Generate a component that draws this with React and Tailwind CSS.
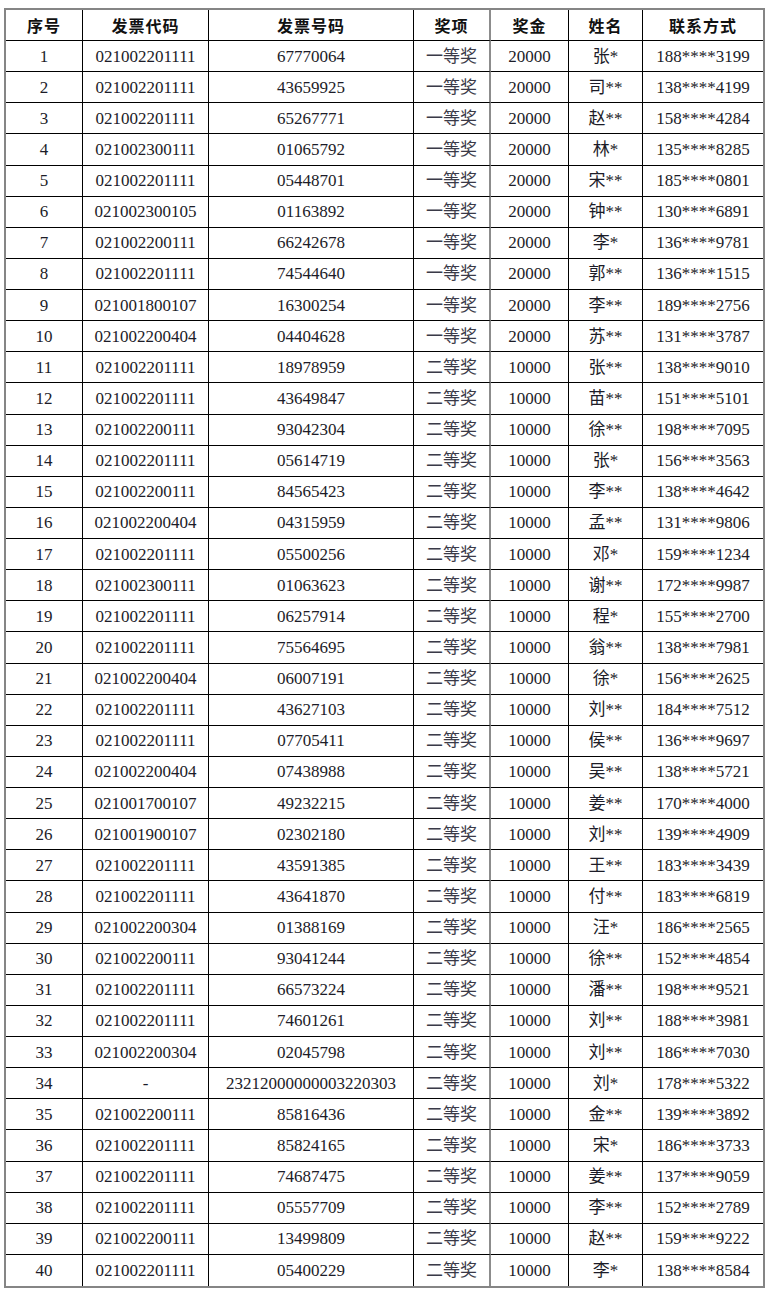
import React from "react";

const rows = [
  ["1", "021002201111", "67770064", "一等奖", "20000", "张*", "188****3199"],
  ["2", "021002201111", "43659925", "一等奖", "20000", "司**", "138****4199"],
  ["3", "021002201111", "65267771", "一等奖", "20000", "赵**", "158****4284"],
  ["4", "021002300111", "01065792", "一等奖", "20000", "林*", "135****8285"],
  ["5", "021002201111", "05448701", "一等奖", "20000", "宋**", "185****0801"],
  ["6", "021002300105", "01163892", "一等奖", "20000", "钟**", "130****6891"],
  ["7", "021002200111", "66242678", "一等奖", "20000", "李*", "136****9781"],
  ["8", "021002201111", "74544640", "一等奖", "20000", "郭**", "136****1515"],
  ["9", "021001800107", "16300254", "一等奖", "20000", "李**", "189****2756"],
  ["10", "021002200404", "04404628", "一等奖", "20000", "苏**", "131****3787"],
  ["11", "021002201111", "18978959", "二等奖", "10000", "张**", "138****9010"],
  ["12", "021002201111", "43649847", "二等奖", "10000", "苗**", "151****5101"],
  ["13", "021002200111", "93042304", "二等奖", "10000", "徐**", "198****7095"],
  ["14", "021002201111", "05614719", "二等奖", "10000", "张*", "156****3563"],
  ["15", "021002200111", "84565423", "二等奖", "10000", "李**", "138****4642"],
  ["16", "021002200404", "04315959", "二等奖", "10000", "孟**", "131****9806"],
  ["17", "021002201111", "05500256", "二等奖", "10000", "邓*", "159****1234"],
  ["18", "021002300111", "01063623", "二等奖", "10000", "谢**", "172****9987"],
  ["19", "021002201111", "06257914", "二等奖", "10000", "程*", "155****2700"],
  ["20", "021002201111", "75564695", "二等奖", "10000", "翁**", "138****7981"],
  ["21", "021002200404", "06007191", "二等奖", "10000", "徐*", "156****2625"],
  ["22", "021002201111", "43627103", "二等奖", "10000", "刘**", "184****7512"],
  ["23", "021002201111", "07705411", "二等奖", "10000", "侯**", "136****9697"],
  ["24", "021002200404", "07438988", "二等奖", "10000", "吴**", "138****5721"],
  ["25", "021001700107", "49232215", "二等奖", "10000", "姜**", "170****4000"],
  ["26", "021001900107", "02302180", "二等奖", "10000", "刘**", "139****4909"],
  ["27", "021002201111", "43591385", "二等奖", "10000", "王**", "183****3439"],
  ["28", "021002201111", "43641870", "二等奖", "10000", "付**", "183****6819"],
  ["29", "021002200304", "01388169", "二等奖", "10000", "汪*", "186****2565"],
  ["30", "021002200111", "93041244", "二等奖", "10000", "徐**", "152****4854"],
  ["31", "021002201111", "66573224", "二等奖", "10000", "潘**", "198****9521"],
  ["32", "021002201111", "74601261", "二等奖", "10000", "刘**", "188****3981"],
  ["33", "021002200304", "02045798", "二等奖", "10000", "刘**", "186****7030"],
  ["34", "-", "23212000000003220303", "二等奖", "10000", "刘*", "178****5322"],
  ["35", "021002200111", "85816436", "二等奖", "10000", "金**", "139****3892"],
  ["36", "021002201111", "85824165", "二等奖", "10000", "宋*", "186****3733"],
  ["37", "021002201111", "74687475", "二等奖", "10000", "姜**", "137****9059"],
  ["38", "021002201111", "05557709", "二等奖", "10000", "李**", "152****2789"],
  ["39", "021002200111", "13499809", "二等奖", "10000", "赵**", "159****9222"],
  ["40", "021002201111", "05400229", "二等奖", "10000", "李*", "138****8584"],
];

const headers = ["序号", "发票代码", "发票号码", "奖项", "奖金", "姓名", "联系方式"];

// right edge of each column: last one has none, the prize column gets the grey double rule
const colBorder = [
  "border-r border-r-black",
  "border-r border-r-black",
  "border-r border-r-black",
  "border-r-2 border-r-[#8c8c8c]",
  "border-r border-r-black",
  "border-r border-r-black",
  "",
];

const Cell = ({ col, last, header, children }) => (
  <div
    className={`flex items-center justify-center whitespace-nowrap ${colBorder[col]} ${
      last ? "" : "border-b border-b-black"
    } ${
      header
        ? "h-[31px] font-bold tracking-[1px] font-[family-name:'Noto_Sans_CJK_SC',sans-serif] text-[16px] text-[#111]"
        : "h-[31.125px]"
    }`}
  >
    {children}
  </div>
);

export default function App() {
  return (
    <div className="bg-white w-[769px] h-[1299px] pt-[8px] pl-[4px]">
      <div className="w-[761px] border-2 border-[#858585] grid grid-cols-[77px_126px_205px_77px_78px_74px_120px] text-[17px] leading-none text-[#1c1c28] font-[family-name:'Liberation_Serif','Noto_Sans_CJK_SC',serif]">
        {headers.map((h, i) => (
          <Cell key={h} col={i} header>
            {h}
          </Cell>
        ))}
        {rows.map((r, ri) =>
          r.map((v, ci) => (
            <Cell key={`${ri}-${ci}`} col={ci} last={ri === rows.length - 1}>
              <span className={ci === 3 ? "text-[#3a3a48]" : ""}>{v}</span>
            </Cell>
          ))
        )}
      </div>
    </div>
  );
}
